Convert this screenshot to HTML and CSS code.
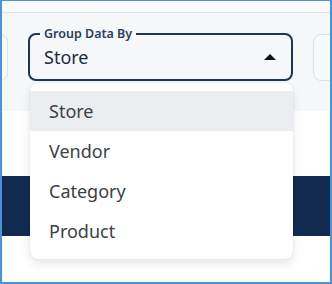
FILE: index.html
```html
<!DOCTYPE html>
<html lang="en">
<head>
    <meta charset="UTF-8">
    <title>Group Data By</title>
    <link rel="stylesheet" href="styles.css">
</head>
<body>
    <div class="frame">
        <div class="topbar"></div>
        <div class="toolbar">
            <div class="card card-left"></div>
            <fieldset class="select">
                <legend>Group Data By</legend>
                <span class="value">Store</span>
                <span class="caret"></span>
            </fieldset>
            <div class="card card-right"></div>
        </div>
        <div class="gap"></div>
        <div class="band"></div>
        <div class="rest"></div>

        <ul class="menu">
            <li class="active">Store</li>
            <li>Vendor</li>
            <li>Category</li>
            <li>Product</li>
        </ul>
    </div>
</body>
</html>
```

FILE: styles.css
```css
/* Base */
* {
    margin: 0;
    padding: 0;
    box-sizing: border-box;
}

body {
    font-family: 'Noto Sans', 'Open Sans', sans-serif;
    background: #ffffff;
}

/* Cadre */
.frame {
    position: relative;
    width: 332px;
    height: 284px;
    border: 2px solid #4a93d6;
    border-top-width: 1px;
    overflow: hidden;
    background: #ffffff;
}

.topbar {
    height: 11px;
    background: #f9fafb;
    border-bottom: 1px solid #e2e4e8;
    box-sizing: content-box;
}

/* Barre de filtres */
.toolbar {
    display: flex;
    gap: 20px;
    height: 98px;
    padding-top: 21px;
    background: #f6f7f9;
}

.card {
    flex: none;
    width: 60px;
    height: 47px;
    border: 1px solid #dde0e5;
    border-radius: 8px;
    background: #f8f9fb;
}

.card-left {
    margin-left: -54px;
}

.select {
    position: relative;
    flex: none;
    width: 265px;
    height: 53px;
    margin-top: -6px;
    border: 2px solid #1f3456;
    border-radius: 8px;
    padding: 0 14px;
    display: flex;
    align-items: center;
    justify-content: space-between;
}

.select legend {
    padding: 0 4px;
    margin-left: -4px;
    font-size: 12.5px;
    font-weight: 600;
    color: #2c3f5c;
    line-height: 12px;
}

.select .value {
    font-size: 18px;
    color: #1c2a3d;
    margin-top: -6px;
}

.caret {
    width: 0;
    height: 0;
    margin-top: -6px;
    margin-right: 1px;
    border-left: 6px solid transparent;
    border-right: 6px solid transparent;
    border-bottom: 6px solid #111111;
}

.gap {
    height: 65px;
}

.band {
    height: 60px;
    background: #132a4f;
}

/* Menu déroulant */
.menu {
    position: absolute;
    left: 28px;
    top: 82px;
    width: 263px;
    padding: 8px 0;
    list-style: none;
    background: #ffffff;
    border-radius: 8px;
    box-shadow: 0 5px 10px rgba(20, 30, 60, 0.10), 0 0 2px rgba(20, 30, 60, 0.12);
}

.menu li {
    height: 40px;
    line-height: 40px;
    padding-left: 19px;
    font-size: 18px;
    color: #3b3f47;
}

.menu li.active {
    background: #ecedf1;
}
```
